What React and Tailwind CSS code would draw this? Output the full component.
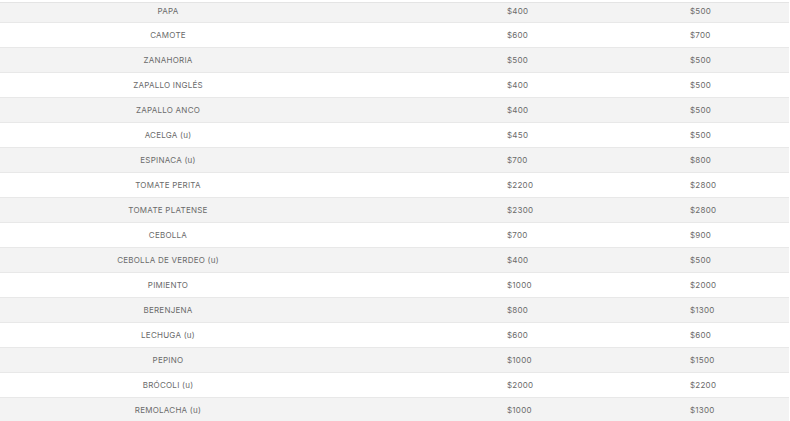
import React from 'react';

const rows = [
    ['PAPA', '$400', '$500'],
    ['CAMOTE', '$600', '$700'],
    ['ZANAHORIA', '$500', '$500'],
    ['ZAPALLO INGLÉS', '$400', '$500'],
    ['ZAPALLO ANCO', '$400', '$500'],
    ['ACELGA (u)', '$450', '$500'],
    ['ESPINACA (u)', '$700', '$800'],
    ['TOMATE PERITA', '$2200', '$2800'],
    ['TOMATE PLATENSE', '$2300', '$2800'],
    ['CEBOLLA', '$700', '$900'],
    ['CEBOLLA DE VERDEO (u)', '$400', '$500'],
    ['PIMIENTO', '$1000', '$2000'],
    ['BERENJENA', '$800', '$1300'],
    ['LECHUGA (u)', '$600', '$600'],
    ['PEPINO', '$1000', '$1500'],
    ['BRÓCOLI (u)', '$2000', '$2200'],
    ['REMOLACHA (u)', '$1000', '$1300'],
];

const App = () => {
    return (
        <div className="w-[790px] h-[421px] overflow-hidden bg-white text-[8px] tracking-[0.03em] text-[#6a6a6a]" style={{ fontFamily: 'Inter, "Liberation Sans", sans-serif' }}>
            <div className="pt-[2px]">
                <div className="w-[789px] border-t border-[#e4e4e4]">
                    {rows.map((r, i) => (
                        <div
                            key={r[0]}
                            className={`grid grid-cols-[336px_171px_183px_1fr] items-center border-b border-[#e8e8e8] ${i === 0 ? 'h-[20px] pb-[3px]' : 'h-[25px]'} ${i % 2 === 0 ? 'bg-[#f3f3f3]' : 'bg-white'}`}
                        >
                            <div className="text-center">{r[0]}</div>
                            <div></div>
                            <div>{r[1]}</div>
                            <div>{r[2]}</div>
                        </div>
                    ))}
                </div>
            </div>
        </div>
    );
};

export default App;
